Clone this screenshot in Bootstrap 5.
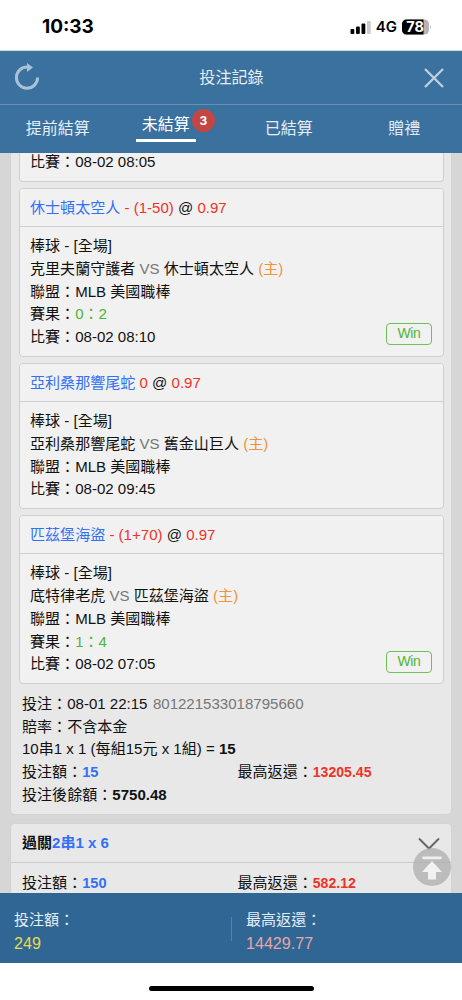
<!DOCTYPE html>
<html lang="zh-Hant">
<head>
<meta charset="utf-8">
<meta name="viewport" content="width=device-width, initial-scale=1">
<title>投注記錄</title>
<link rel="stylesheet" href="https://cdn.jsdelivr.net/npm/bootstrap@5.3.0/dist/css/bootstrap.min.css">
<style>
  body { font-family: "Liberation Sans", "Noto Sans CJK TC", sans-serif; font-size: 15.05px; line-height: 22.7px; color: #111; height: 1000px; overflow: hidden; background: #fff; }
  .status { height: 51px; padding: 4px 30px 0 42px; font-family: Inter, sans-serif; font-weight: 700; color: #000; border-bottom: 1px solid #d5dade; }
  .clock { font-size: 19px; }
  .net { font-size: 15px; font-weight: 600; }
  .titlebar { height: 54px; background: #3b719f; color: #e6eef5; font-size: 16.1px; border-bottom: 1px solid #6690b3; padding: 0 17px 0 14px; }
  .tabs { height: 48px; background: #3b719f; color: #e6eef5; font-size: 16px; padding-top: 1px; }
  .tab-on { border-bottom: 3px solid #fff; height: 31px; line-height: 27px; padding: 0 6px; margin-top: -6px; color: #fff; }
  .count { width: 23px; height: 23px; background: #c24642; font: 700 12px/23px Inter, sans-serif; margin: -18px 0 0 -4px; }
  .feed { height: 740px; background: #d6d6d6; padding: 0 11px; }
  .slip { background: #e8e8e8; border-radius: 4px; margin-bottom: 10px; box-shadow: 0 0 2px #ccc; }
  .slip-list { padding: 0 7.5px; }
  .leg { --bs-card-bg: #f1f1f1; --bs-card-border-color: #cfcfcf; --bs-card-border-radius: 4px; --bs-card-inner-border-radius: 3px; --bs-card-cap-bg: #f1f1f1; margin-bottom: 6px; color: #111; }
  .leg .card-header { height: 38px; padding: 8px 10.5px 0; }
  .leg .card-body { padding: 8.7px 10.5px 6.8px; }
  .leg.rest { border-top: 0; border-radius: 0 0 4px 4px; margin-top: -2px; }
  .leg.rest .card-body { padding-top: 0; }
  .blue { color: #3470f5; } .red { color: #ef3326; } .orange { color: #f0923a; } .green { color: #50b533; } .gray { color: #777; }
  b.red, b.blue { font-size: 14.6px; }
  b.red { font-size: 14.1px; }
  .win { width: 46px; height: 22px; line-height: 19px; font-size: 14px; letter-spacing: -.3px; border: 1.5px solid #71bf58; border-radius: 4px; color: #50b533; margin-bottom: 3.5px; }
  .slip-info { padding: 3px 11px 8px; }
  .half { width: 215.5px; }
  .slip-head { height: 39px; padding: 0 11px; border-bottom: 1px solid #cbcbcb; }
  .slip-sum { padding: 9px 11px 0; }
  .totop { right: 11px; bottom: 7px; }
  .totals { height: 70px; background: #306694; color: #e6eef5; padding-top: 16px; }
  .totals .sum { padding-left: 14px; }
  .totals .num { font-size: 16.1px; line-height: 22px; }
  .stake { width: 231px; color: inherit; }
  .stake .num { color: #e8db4e; }
  .payout .num { color: #e8a5a5; }
  .split { width: 1px; height: 24px; background: #5582a8; margin-top: 8px; }
  .home { width: 165px; height: 5px; background: #000; margin-top: 23px; }
</style>
</head>
<body>
<div class="status d-flex align-items-center justify-content-between">
  <span class="clock">10:33</span>
  <div class="d-flex align-items-center net">
    <svg width="22" height="14" viewBox="0 0 22 14"><rect x="0.5" y="9" width="3.8" height="5" rx="1"/><rect x="6" y="6.5" width="3.8" height="7.5" rx="1"/><rect x="11.5" y="3.5" width="3.8" height="10.5" rx="1"/><rect x="17" y="1" width="3.8" height="13" rx="1" fill="#ccc"/></svg>
    <span class="ms-1 me-1">4G</span>
    <svg width="31" height="16" viewBox="0 0 31 16"><rect x="1" y="0.5" width="27" height="15" rx="4.5" fill="#b4b4b4"/><path d="M22.5.5H5.5a4.5 4.5 0 0 0-4.5 4.5v6a4.5 4.5 0 0 0 4.500 4.500h17z"/><path d="M29 5.500q1.700 2.500 0 5z" fill="#b4b4b4"/><text x="14" y="13.200" text-anchor="middle" font-size="14.500" font-weight="700" fill="#fff">78</text></svg>
  </div>
</div>
<header>
  <div class="titlebar d-flex align-items-center justify-content-between">
    <svg width="26" height="29" viewBox="0 0 26 29" fill="none"><path d="M13.500 4A10.600 10.600 0 1 0 23.600 14.500" stroke="#a9c2d7" stroke-width="3"/><path d="M13 0L19 4.500 13 9z" fill="#a9c2d7"/></svg>
    <span>投注記錄</span>
    <svg width="22" height="22" viewBox="0 0 22 22"><path d="M2 2l18 18M20 2l-18 18" stroke="#bdd0e0" stroke-width="2.300"/></svg>
  </div>
  <nav class="tabs row g-0 align-items-center text-center">
    <div class="col-3">提前結算</div>
    <div class="col-3 d-flex justify-content-center align-items-center ps-1"><span class="tab-on">未結算</span><span class="count rounded-circle text-white">3</span></div>
    <div class="col-3">已結算</div>
    <div class="col-3">贈禮</div>
  </nav>
</header>
<main class="feed position-relative overflow-hidden">
  <section class="slip">
    <div class="slip-list">
      <article class="card leg rest"><div class="card-body">比賽：08-02 08:05</div></article>
      <article class="card leg">
        <div class="card-header"><span class="blue">休士頓太空人</span> <span class="red">- (1-50)</span> @ <span class="red">0.97</span></div>
        <div class="card-body d-flex justify-content-between align-items-end">
          <div>
            <div>棒球 - [全場]</div>
            <div>克里夫蘭守護者 <span class="gray">VS</span> 休士頓太空人 <span class="orange">(主)</span></div>
            <div>聯盟：MLB 美國職棒</div>
            <div>賽果：<span class="green">0：2</span></div>
            <div>比賽：08-02 08:10</div>
          </div>
          <span class="win text-center">Win</span>
        </div>
      </article>
      <article class="card leg">
        <div class="card-header"><span class="blue">亞利桑那響尾蛇</span> <span class="red">0</span> @ <span class="red">0.97</span></div>
        <div class="card-body">
          <div>棒球 - [全場]</div>
          <div>亞利桑那響尾蛇 <span class="gray">VS</span> 舊金山巨人 <span class="orange">(主)</span></div>
          <div>聯盟：MLB 美國職棒</div>
          <div>比賽：08-02 09:45</div>
        </div>
      </article>
      <article class="card leg">
        <div class="card-header"><span class="blue">匹茲堡海盜</span> <span class="red">- (1+70)</span> @ <span class="red">0.97</span></div>
        <div class="card-body d-flex justify-content-between align-items-end">
          <div>
            <div>棒球 - [全場]</div>
            <div>底特律老虎 <span class="gray">VS</span> 匹茲堡海盜 <span class="orange">(主)</span></div>
            <div>聯盟：MLB 美國職棒</div>
            <div>賽果：<span class="green">1：4</span></div>
            <div>比賽：08-02 07:05</div>
          </div>
          <span class="win text-center">Win</span>
        </div>
      </article>
    </div>
    <div class="slip-info">
      <div>投注：08-01 22:15 <span class="gray">&#8202;801221533018795660</span></div>
      <div>賠率：不含本金</div>
      <div>10串1 x 1 (每組15元 x 1組) = <b>15</b></div>
      <div class="d-flex"><div class="half">投注額：<b class="blue">15</b></div><div>最高返還：<b class="red">13205.45</b></div></div>
      <div>投注後餘額：<b>5750.48</b></div>
    </div>
  </section>
  <section class="slip">
    <div class="slip-head d-flex align-items-center justify-content-between">
      <b>過關<span class="blue">2串1 x 6</span></b>
      <svg width="22" height="13" viewBox="0 0 22 13"><path d="M1 1.500l10 10 10-10" fill="none" stroke="#666" stroke-width="2"/></svg>
    </div>
    <div class="slip-sum d-flex"><div class="half">投注額：<b class="blue">150</b></div><div>最高返還：<b class="red">582.12</b></div></div>
  </section>
  <svg class="totop position-absolute" width="38" height="38" viewBox="0 0 38 38"><circle cx="19" cy="19" r="19" fill="#aaa" fill-opacity=".7"/><path d="M10.500 9.800h17" stroke="#eee" stroke-width="2.800" stroke-linecap="round"/><path d="M19 13l10 11h-6v7.500h-8V24H9z" fill="#f1f1f1"/></svg>
</main>
<footer>
  <div class="totals d-flex">
    <div class="sum stake"><div>投注額：</div><div class="num">249</div></div>
    <div class="split"></div>
    <div class="sum payout"><div>最高返還：</div><div class="num">14429.77</div></div>
  </div>
  <div class="home rounded-pill mx-auto"></div>
</footer>
<script src="https://cdn.jsdelivr.net/npm/bootstrap@5.3.0/dist/js/bootstrap.bundle.min.js"></script>
</body>
</html>
